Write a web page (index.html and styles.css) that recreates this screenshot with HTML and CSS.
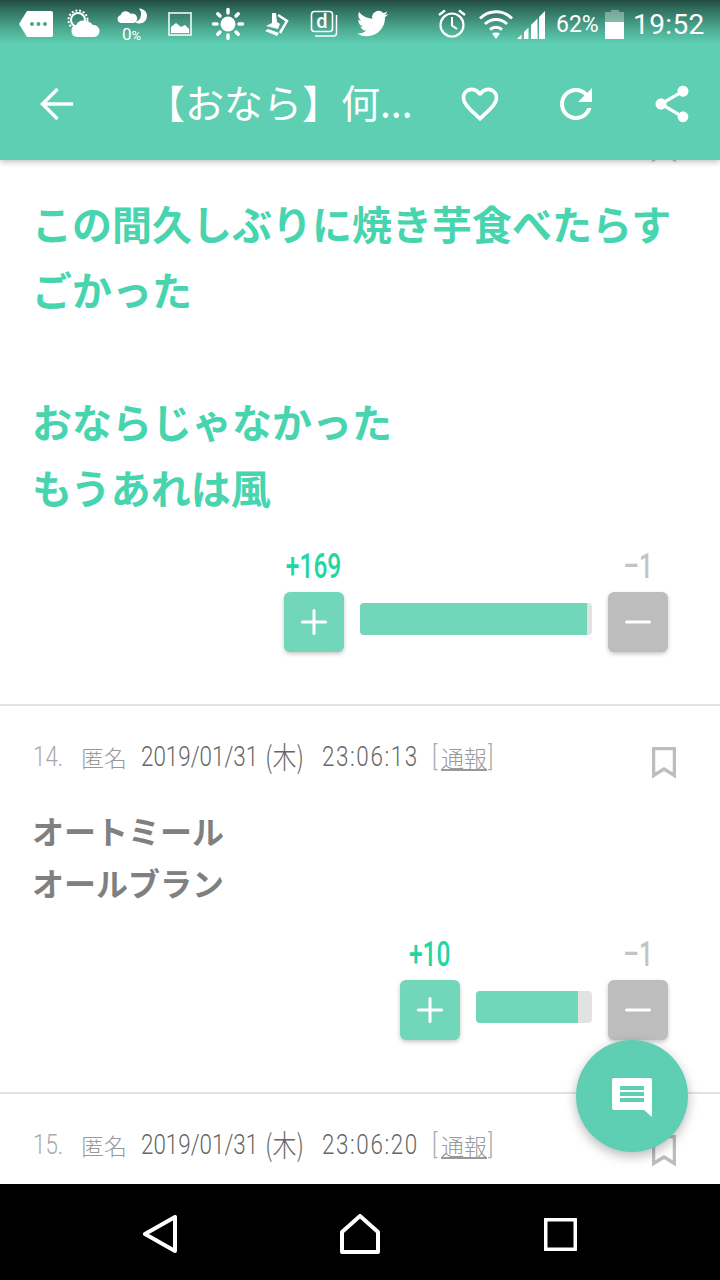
FILE: index.html
```html
<!DOCTYPE html>
<html lang="ja">
<head>
  <meta charset="UTF-8">
  <title>【おなら】何...</title>
  <link rel="stylesheet" href="styles.css">
</head>
<body>
  <div class="phone">
    <header class="appbar">
      <div class="status">
        <div class="status-left">
          <svg class="slot" viewBox="0 0 48 48"><path class="w" d="M7 24 15 11H39a2 2 0 0 1 2 2V35a2 2 0 0 1-2 2H15Z"/><circle class="dot" cx="20" cy="24" r="2"/><circle class="dot" cx="26.500" cy="24" r="2"/><circle class="dot" cx="33" cy="24" r="2"/></svg>
          <svg class="slot" viewBox="0 0 48 48"><circle class="line" cx="18" cy="20" r="7" stroke-width="2"/><circle class="line" cx="18" cy="20" r="9.500" stroke-width="2" stroke-dasharray="2 1.800"/><path class="w" d="M17 37a6 6 0 0 1-1-11.800 7.500 7.500 0 0 1 11-3.600 8 8 0 0 1 6 3.400A6 6 0 0 1 34 37H17Z"/></svg>
          <svg class="slot" viewBox="0 0 48 48"><path class="w" d="M13 23a4 4 0 0 1-.500-7.800 5.500 5.500 0 0 1 10-1.400A4.700 4.700 0 0 1 26 23Z"/><path class="w" d="M31 8.500A7.500 7.500 0 1 1 27 22 8 8 0 0 0 33 15 8 8 0 0 0 31 8.500Z"/><text class="pct" x="14" y="40">0<tspan class="pct-small">%</tspan></text></svg>
          <svg class="slot" viewBox="0 0 48 48"><rect class="line faint" x="13" y="13" width="22" height="22" stroke-width="2"/><path class="w" d="M15 33V27L20 23 25 27 29 25 33 29V33Z"/></svg>
          <svg class="slot" viewBox="0 0 48 48"><circle class="w" cx="24" cy="24" r="7.500"/><path class="ray" d="M24 9.500V13M24 35V38.500M9.500 24H13M35 24H38.500M13.800 13.800 16 16M32 32 34.200 34.200M34.200 13.800 32 16M16 32 13.800 34.200"/></svg>
          <svg class="slot" viewBox="0 0 48 48"><path class="line" stroke-width="2.500" d="M26 15 35 21 28 33"/><path class="w" d="M20 13H24L25 22 28 24 26 29 14 26 20 23Z"/><path class="w" d="M16 29 27 33 25 36 13 31Z"/></svg>
          <svg class="slot" viewBox="0 0 48 48"><rect class="bg-line" x="11.500" y="11.500" width="21" height="20" rx="3"/><path class="thin" d="M36.500 15V33a3 3 0 0 1-3 3H15"/><text class="d-mark" x="22" y="28">d</text></svg>
          <svg class="slot" viewBox="0 0 48 48"><path class="w" transform="translate(9 8) scale(1.300)" d="M23.953 4.570a10 10 0 01-2.825.775 4.958 4.958 0 002.163-2.723c-.951.555-2.005.959-3.127 1.184a4.920 4.920 0 00-8.384 4.482C7.690 8.095 4.067 6.130 1.640 3.162a4.822 4.822 0 00-.666 2.475c0 1.710.870 3.213 2.188 4.096a4.904 4.904 0 01-2.228-.616v.060a4.923 4.923 0 003.946 4.827 4.996 4.996 0 01-2.212.085 4.936 4.936 0 004.604 3.417 9.867 9.867 0 01-6.102 2.105c-.390 0-.779-.023-1.170-.067a13.995 13.995 0 007.557 2.209c9.053 0 13.998-7.496 13.998-13.985 0-.210 0-.420-.015-.630A9.935 9.935 0 0024 4.590z"/></svg>
        </div>
        <div class="status-right">
          <svg class="alarm" viewBox="0 0 30 48"><circle class="line" cx="15" cy="25" r="11.500" stroke-width="2.200"/><path class="line" stroke-width="2" d="M15 17V25.500L20 29"/><path class="line" stroke-width="2.400" d="M2 15 8 10.500M28 15 22 10.500"/></svg>
          <svg class="wifi" viewBox="0 0 36 48"><path class="line" stroke-width="3" d="M2 18.500C11 9.500 25 9.500 34 18.500"/><path class="line" stroke-width="3" d="M7 24C13.500 18 22.500 18 29 24"/><path class="line" stroke-width="3" d="M12 29.500C15.500 26.500 20.500 26.500 24 29.500"/><path class="w" d="M14 33.500C16 32 20 32 22 33.500L18 39Z"/></svg>
          <svg class="signal" viewBox="0 0 28 48"><path class="w" d="M0 39 4.500 34.500V39ZM7 32V39H11.500V27.500ZM14 25V39H20.500V18.500ZM22 17V39H28V11Z"/></svg>
          <span class="battery-pct">62%</span>
          <div class="battery"><div class="battery-nub"></div><div class="battery-empty"></div><div class="battery-full"></div></div>
          <span class="clock">19:52</span>
        </div>
      </div>
      <div class="toolbar">
        <div class="tool">
          <svg class="icon48" viewBox="0 0 48 48"><path class="arrow" d="M41 24H11M25.500 9 10.500 24 25.500 39"/></svg>
        </div>
        <div class="title">【おなら】何...</div>
        <div class="tool">
          <svg class="icon44" viewBox="0 0 24 24"><path class="w" d="M16.500 3c-1.740 0-3.410.810-4.500 2.090C10.910 3.810 9.240 3 7.500 3 4.420 3 2 5.420 2 8.500c0 3.780 3.400 6.860 8.550 11.540L12 21.350l1.450-1.320C18.600 15.360 22 12.280 22 8.500 22 5.420 19.580 3 16.500 3zm-4.400 15.550l-.1.100-.1-.100C7.140 14.240 4 11.390 4 8.500 4 6.500 5.500 5 7.500 5c1.540 0 3.040.990 3.570 2.360h1.870C13.460 5.990 14.960 5 16.500 5c2 0 3.500 1.500 3.500 3.500 0 2.890-3.140 5.740-7.900 10.050z"/></svg>
        </div>
        <div class="tool">
          <svg class="icon48" viewBox="0 0 24 24"><path class="w" d="M17.650 6.350C16.200 4.900 14.210 4 12 4c-4.420 0-7.990 3.580-7.990 8s3.570 8 7.990 8c3.730 0 6.840-2.550 7.730-6h-2.080c-.82 2.330-3.040 4-5.650 4-3.310 0-6-2.690-6-6s2.690-6 6-6c1.660 0 3.140.690 4.220 1.780L13 11h7V4l-2.350 2.350z"/></svg>
        </div>
        <div class="tool">
          <svg class="icon44" viewBox="0 0 24 24"><path class="w" d="M18 16.080c-.76 0-1.440.3-1.960.77L8.910 12.700c.05-.23.09-.46.09-.7s-.04-.47-.09-.7l7.050-4.110c.54.5 1.250.81 2.040.81 1.660 0 3-1.340 3-3s-1.340-3-3-3-3 1.340-3 3c0 .24.04.47.09.7L8.040 9.810C7.500 9.310 6.790 9 6 9c-1.660 0-3 1.340-3 3s1.340 3 3 3c.79 0 1.500-.31 2.040-.81l7.120 4.160c-.05.21-.08.43-.08.65 0 1.610 1.310 2.920 2.920 2.920 1.610 0 2.920-1.310 2.920-2.920s-1.310-2.920-2.920-2.920z"/></svg>
        </div>
      </div>
    </header>

    <main class="feed">
      <div class="feed-inner">
        <article class="comment">
          <div class="comment-head">
            <div class="meta"></div>
            <svg class="bookmark" viewBox="0 0 24 32"><path d="M1.500 1.500H22.500V28.500L12 22 1.500 28.500Z"/></svg>
          </div>
          <p class="body body-big">この間久しぶりに焼き芋食べたらすごかった<br><br>おならじゃなかった<br>もうあれは風</p>
          <div class="vote">
            <span class="count count-plus"><span class="narrow">+169</span></span><span></span><span class="count count-minus"><span class="narrow">–1</span></span>
            <button class="vote-btn vote-plus"><svg viewBox="0 0 26 26"><path d="M13 1.500V24.500M1.500 13H24.500"/></svg></button>
            <div class="bar bar-long"><div class="bar-fill" style="width:98%"></div></div>
            <button class="vote-btn vote-minus"><svg viewBox="0 0 26 26"><path d="M1.500 13H24.500"/></svg></button>
          </div>
        </article>

        <article class="comment">
          <div class="comment-head">
            <div class="meta">
              <span class="num"><span class="squeeze">14.</span></span>
              <span class="name">匿名</span>
              <span class="date"><span class="squeeze">2019/01/31</span></span>
              <span class="day"><span class="squeeze">(木)</span></span>
              <span class="time"><span class="squeeze">23:06:13</span></span>
              <span class="report"><span class="squeeze">[</span><a>通報</a><span class="squeeze">]</span></span>
            </div>
            <svg class="bookmark" viewBox="0 0 24 32"><path d="M1.500 1.500H22.500V28.500L12 22 1.500 28.500Z"/></svg>
          </div>
          <p class="body">オートミール<br>オールブラン</p>
          <div class="vote">
            <span class="count count-plus"><span class="narrow">+10</span></span><span></span><span class="count count-minus"><span class="narrow">–1</span></span>
            <button class="vote-btn vote-plus"><svg viewBox="0 0 26 26"><path d="M13 1.500V24.500M1.500 13H24.500"/></svg></button>
            <div class="bar bar-short"><div class="bar-fill" style="width:88%"></div></div>
            <button class="vote-btn vote-minus"><svg viewBox="0 0 26 26"><path d="M1.500 13H24.500"/></svg></button>
          </div>
        </article>

        <article class="comment">
          <div class="comment-head">
            <div class="meta">
              <span class="num"><span class="squeeze">15.</span></span>
              <span class="name">匿名</span>
              <span class="date"><span class="squeeze">2019/01/31</span></span>
              <span class="day"><span class="squeeze">(木)</span></span>
              <span class="time"><span class="squeeze">23:06:20</span></span>
              <span class="report"><span class="squeeze">[</span><a>通報</a><span class="squeeze">]</span></span>
            </div>
            <svg class="bookmark" viewBox="0 0 24 32"><path d="M1.500 1.500H22.500V28.500L12 22 1.500 28.500Z"/></svg>
          </div>
        </article>
      </div>
    </main>

    <button class="fab">
      <svg viewBox="0 0 40 40"><path class="w" d="M2 0H38a2 2 0 0 1 2 2V39L32 32H2a2 2 0 0 1-2-2V2A2 2 0 0 1 2 0Z"/><path class="fab-lines" d="M8 10H32M8 16H32M8 22H32"/></svg>
    </button>

    <nav class="navbar">
      <div class="nav-slot"><svg class="nav-back" viewBox="0 0 34 38"><path d="M2 19 32 2V36Z"/></svg></div>
      <div class="nav-slot"><svg class="nav-home" viewBox="0 0 40 40"><path d="M2 38V18L20 2 38 18V38Z"/></svg></div>
      <div class="nav-slot"><svg class="nav-recent" viewBox="0 0 33 33"><rect x="1.500" y="1.500" width="30" height="30" rx="1"/></svg></div>
    </nav>
  </div>
</body>
</html>
```

FILE: styles.css
```css
* {
  box-sizing: border-box;
}

html, body {
  margin: 0;
  padding: 0;
}

body {
  font-family: "Noto Sans CJK JP", "Noto Sans", sans-serif;
  background: #fff;
}

.phone {
  position: relative;
  width: 720px;
  height: 1280px;
  display: flex;
  flex-direction: column;
  overflow: hidden;
}

/* shared svg bits */
.w { fill: #fff; }
.line { fill: none; stroke: #fff; }
.faint { stroke-opacity: 0.75; }
.thin { fill: none; stroke: #fff; stroke-width: 1.500; }
.dot { fill: #4ea48c; }
.ray { fill: none; stroke: #fff; stroke-width: 3.500; stroke-linecap: round; }
.bg-line { fill: none; stroke: #fff; stroke-width: 1.600; }
.pct { fill: #fff; font-family: Roboto, sans-serif; font-size: 17px; }
.pct-small { font-size: 13px; }
.d-mark { fill: #fff; font-family: Roboto, sans-serif; font-weight: 500; font-size: 20px; text-anchor: middle; }

/* header */
.appbar {
  height: 160px;
  flex: none;
  background: #5ecfb3;
  position: relative;
  z-index: 2;
  box-shadow: 0 2px 6px rgba(0, 0, 0, 0.25);
}

.status {
  height: 48px;
  display: flex;
  justify-content: space-between;
  background: linear-gradient(#234b40 0, #2f6a5a 8px, #4ba78f 28px, #5ecfb3 44px);
}

.status-left {
  display: flex;
  padding-left: 12px;
}

.slot {
  width: 48px;
  height: 48px;
  flex: none;
}

.status-right {
  display: flex;
  align-items: center;
  color: #fff;
  font-family: Roboto, sans-serif;
  padding-right: 17px;
}

.alarm { width: 30px; height: 48px; }
.wifi { width: 36px; height: 48px; margin-left: 11px; }
.signal { width: 28px; height: 48px; margin-left: 3px; }

.battery-pct {
  font-size: 23px;
  margin-left: 11px;
  width: 49px;
}

.battery {
  width: 19px;
  height: 29px;
  display: flex;
  flex-direction: column;
  align-items: center;
}

.battery-nub {
  width: 8px;
  height: 2px;
  background: rgba(255, 255, 255, 0.35);
}

.battery-empty {
  width: 100%;
  height: 10px;
  background: rgba(255, 255, 255, 0.35);
}

.battery-full {
  width: 100%;
  flex: 1;
  background: #fff;
}

.clock {
  font-size: 28px;
  margin-left: 9px;
  width: 70px;
  letter-spacing: 0.4px;
}

.toolbar {
  height: 112px;
  display: flex;
  align-items: center;
  padding-left: 8px;
}

.tool {
  width: 96px;
  height: 96px;
  flex: none;
  display: flex;
  align-items: center;
  justify-content: center;
}

.icon48 { width: 48px; height: 48px; }
.icon44 { width: 44px; height: 44px; }

.arrow {
  fill: none;
  stroke: #fff;
  stroke-width: 3.500;
}

.title {
  width: 328px;
  flex: none;
  color: #fff;
  font-size: 39px;
  line-height: 1;
  padding-left: 42px;
  margin-top: -5px;
  white-space: nowrap;
}

/* comments */
.feed {
  flex: 1;
  overflow: hidden;
}

.feed-inner {
  margin-top: -70px;
}

.comment {
  padding: 41px 44px 52px 32px;
  border-bottom: 2px solid #e3e3e3;
}

.comment:last-child {
  border-bottom: none;
}

.comment-head {
  display: flex;
  justify-content: space-between;
  align-items: flex-start;
  height: 32px;
}

.meta {
  display: flex;
  align-items: center;
  height: 26px;
  font-family: Roboto, sans-serif;
  font-size: 28px;
  font-weight: 300;
  line-height: 26px;
  color: #666;
  white-space: nowrap;
  margin: -3px 0 0 1px;
}

.squeeze {
  display: inline-block;
  transform: scaleX(0.8);
  transform-origin: 0 50%;
}

.num {
  width: 48px;
  color: #aaa;
}

.name {
  width: 60px;
  color: #999;
  font-family: "Noto Sans CJK JP", sans-serif;
  font-size: 23px;
}

.date {
  width: 124px;
}

.day {
  width: 57px;
  font-family: "Noto Sans CJK JP", sans-serif;
  font-size: 30px;
  margin-top: -5px;
}

.time {
  width: 110px;
  letter-spacing: 2px;
}

.report {
  display: flex;
  color: #aaa;
}

.report .squeeze:first-child {
  width: 9px;
}

.report a {
  font-family: "Noto Sans CJK JP", sans-serif;
  font-size: 23px;
  color: #999;
  text-decoration: underline;
  margin-right: 1px;
}

.bookmark {
  width: 24px;
  height: 32px;
  flex: none;
}

.bookmark path {
  fill: none;
  stroke: #bdbdbd;
  stroke-width: 3.500;
}

.body {
  margin: 25px 0 0;
  font-size: 32px;
  line-height: 52px;
  font-weight: 700;
  color: #808080;
}

.body-big {
  margin-top: 27px;
  font-size: 40px;
  line-height: 66px;
  color: #47d4ae;
}

.vote {
  display: grid;
  grid-template-columns: 60px auto 60px;
  grid-template-rows: 34px 60px;
  column-gap: 16px;
  justify-content: end;
  align-items: center;
  margin: 38px 8px 0 0;
}

.count {
  display: flex;
  justify-content: center;
  font-family: Roboto, sans-serif;
  font-size: 35px;
  line-height: 34px;
  white-space: nowrap;
  margin-top: -16px;
}

.narrow {
  display: inline-block;
  flex: none;
  transform: scaleX(0.7);
}

.count-plus {
  color: #1fd6a5;
  font-weight: 500;
}

.count-minus {
  color: #c4c4c4;
  font-weight: 500;
}

.vote-btn {
  width: 60px;
  height: 60px;
  border: none;
  border-radius: 6px;
  padding: 0;
  display: flex;
  align-items: center;
  justify-content: center;
  box-shadow: 0 2px 4px rgba(0, 0, 0, 0.22);
}

.vote-btn svg {
  width: 26px;
  height: 26px;
}

.vote-btn path {
  fill: none;
  stroke: #fff;
  stroke-width: 3;
  stroke-linecap: round;
}

.vote-plus { background: #72d6bb; }
.vote-minus { background: #bdbdbd; }

.bar {
  height: 32px;
  margin-bottom: 6px;
  background: #e2e2e2;
  border-radius: 4px;
  overflow: hidden;
}

.bar-long { width: 232px; }
.bar-short { width: 116px; }

.bar-fill {
  height: 100%;
  background: #72d6bb;
}

/* floating button */
.fab {
  position: absolute;
  right: 32px;
  bottom: 128px;
  width: 112px;
  height: 112px;
  border: none;
  border-radius: 50%;
  padding: 0;
  z-index: 3;
  background: #5ecfb3;
  box-shadow: 0 4px 12px rgba(0, 0, 0, 0.28);
  display: flex;
  align-items: center;
  justify-content: center;
}

.fab svg {
  width: 40px;
  height: 40px;
  margin-top: 3px;
  overflow: visible;
}

.fab-lines {
  fill: none;
  stroke: #5ecfb3;
  stroke-width: 4;
}

/* android nav */
.navbar {
  height: 96px;
  flex: none;
  background: #000;
  display: flex;
  justify-content: center;
  align-items: center;
  padding-top: 4px;
  position: relative;
  z-index: 4;
}

.nav-slot {
  width: 200px;
  display: flex;
  justify-content: center;
}

.navbar path,
.navbar rect {
  fill: none;
  stroke: #fff;
  stroke-width: 4;
  stroke-linejoin: round;
}

.nav-back { width: 34px; height: 38px; }
.nav-home { width: 40px; height: 40px; }
.nav-recent { width: 33px; height: 33px; }
```
